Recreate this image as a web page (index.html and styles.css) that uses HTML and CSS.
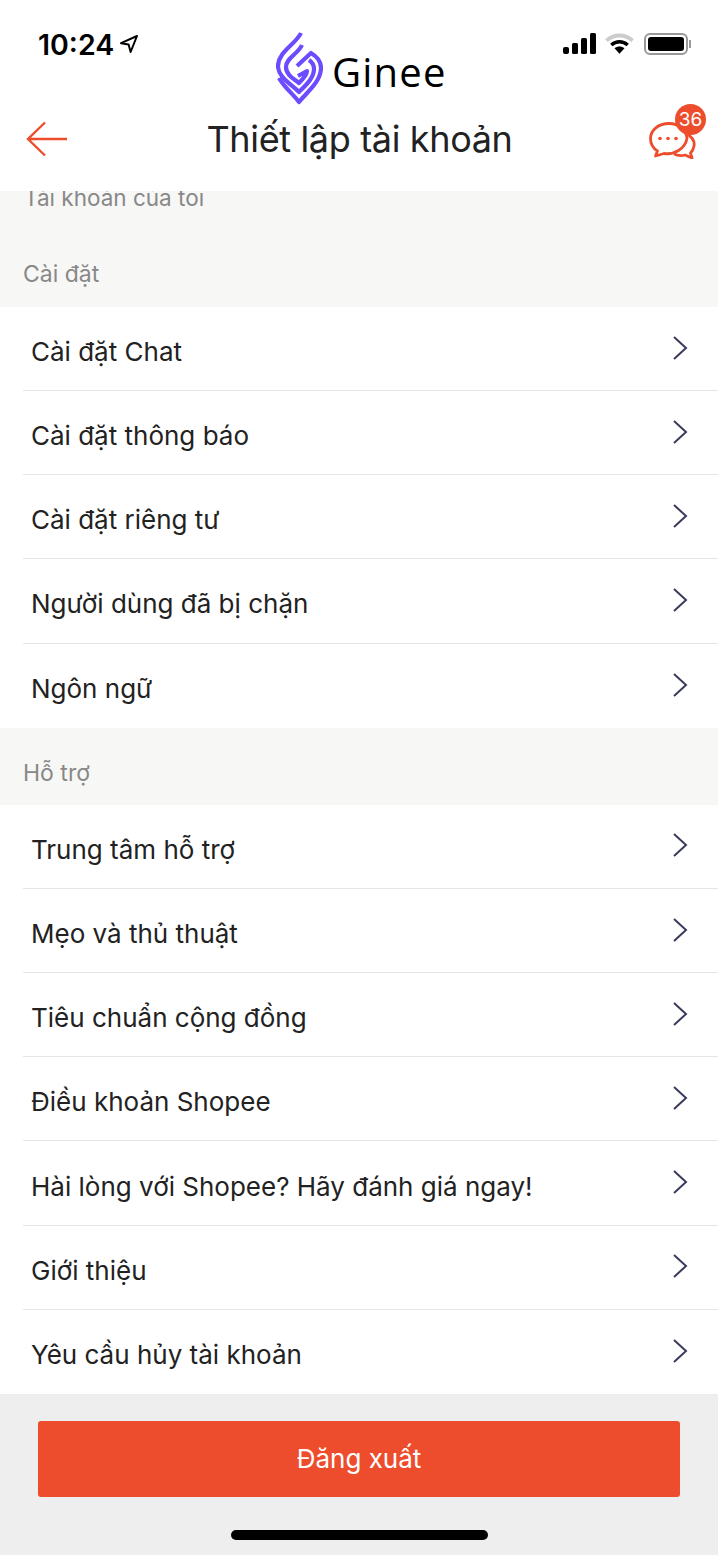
FILE: index.html
```html
<!DOCTYPE html>
<html lang="en">
<head>
    <meta charset="UTF-8">
    <title>Thiết lập tài khoản</title>
    <link rel="stylesheet" href="styles.css">
</head>
<body>
<div class="page">
    <header class="top">
        <div class="status">
            <div class="time">
                <span>10:24</span>
                <svg class="loc" viewBox="0 0 20 20"><path d="M18 2 2 9.2 l7.6 1.4 L11.6 18z" fill="none" stroke="#000" stroke-width="2" stroke-linejoin="round"/></svg>
            </div>
            <div class="status-icons">
                <svg class="signal" viewBox="0 0 33 21"><rect x="0" y="14" width="6" height="7" rx="2"/><rect x="9" y="10" width="6" height="11" rx="1.5"/><rect x="18" y="5" width="6" height="16" rx="1.5"/><rect x="27" y="0" width="6" height="21" rx="1.5"/></svg>
                <svg class="wifi" viewBox="0 0 30 21">
                    <path d="M1.5 7.5C9 .5 21 .5 28.5 7.5" fill="none" stroke="#ccc" stroke-width="4"/>
                    <path d="M6.5 12C11.5 7.5 18.5 7.5 23.5 12" fill="none" stroke="#000" stroke-width="3.5"/>
                    <path d="M15 21 9.8 15.5C13 13 17 13 20.2 15.5z"/>
                </svg>
                <div class="battery"><div class="battery-fill"></div></div>
                <div class="battery-cap"></div>
            </div>
        </div>
        <div class="brand">
            <svg class="brand-logo" viewBox="0 0 47 73">
                <g fill="none" stroke="#6d4cff" stroke-width="4.2" stroke-linejoin="round">
                    <path d="M3 46C8 55 17 62 23 70C30 61 45 50 45 36C45 29 40 24 35 21L21 34"/>
                    <path d="M25 1C20 12 2 20 2 34C2 45 15 52 23 60C30 53 38 46 38 37C38 33 36 30 33 28"/>
                    <path d="M26 13C22 22 10 26 10 35C10 43 18 47 23 51C27 47 31 43 31 39L22 44"/>
                </g>
            </svg>
            <span class="brand-name">Ginee</span>
        </div>
        <div class="nav">
            <svg class="back" viewBox="0 0 42 36"><path d="M41 18H2M19 1.5 2 18l17 16.5" fill="none" stroke="#ee4d2d" stroke-width="2.4"/></svg>
            <h1 class="title">Thiết lập tài khoản</h1>
            <div class="chat">
                <svg class="chat-icon" viewBox="0 0 47 37">
                    <g fill="none" stroke="#ee4d2d" stroke-width="2.8" stroke-linejoin="round">
                        <path d="M20 1.5C9.5 1.5 1.5 8 1.5 16.5C1.5 22.5 4.5 26.5 8.5 29L6.5 34L15 31.5C25 33 36 27 38 16.5C37 8 30 1.5 20 1.5z"/>
                        <path d="M38 12C43 15 46 19 45 24C44.5 27 43.5 29 41.5 31L43 36L36 33C32 34 28 33.5 25 32"/>
                    </g>
                    <g fill="#ee4d2d"><circle cx="11" cy="16.5" r="1.8"/><circle cx="19" cy="16.5" r="1.8"/><circle cx="27" cy="16.5" r="1.8"/></g>
                </svg>
                <span class="badge">36</span>
            </div>
        </div>
    </header>

    <div class="cut-row"><span>Tài khoản của tôi</span></div>

    <div class="section-label">Cài đặt</div>
    <ul class="list">
        <li class="row"><span>Cài đặt Chat</span><svg class="chev" viewBox="0 0 16 26"><path d="M2 2l12 11L2 24"/></svg></li>
        <li class="row"><span>Cài đặt thông báo</span><svg class="chev" viewBox="0 0 16 26"><path d="M2 2l12 11L2 24"/></svg></li>
        <li class="row"><span>Cài đặt riêng tư</span><svg class="chev" viewBox="0 0 16 26"><path d="M2 2l12 11L2 24"/></svg></li>
        <li class="row"><span>Người dùng đã bị chặn</span><svg class="chev" viewBox="0 0 16 26"><path d="M2 2l12 11L2 24"/></svg></li>
        <li class="row"><span>Ngôn ngữ</span><svg class="chev" viewBox="0 0 16 26"><path d="M2 2l12 11L2 24"/></svg></li>
    </ul>

    <div class="section-label">Hỗ trợ</div>
    <ul class="list">
        <li class="row"><span>Trung tâm hỗ trợ</span><svg class="chev" viewBox="0 0 16 26"><path d="M2 2l12 11L2 24"/></svg></li>
        <li class="row"><span>Mẹo và thủ thuật</span><svg class="chev" viewBox="0 0 16 26"><path d="M2 2l12 11L2 24"/></svg></li>
        <li class="row"><span>Tiêu chuẩn cộng đồng</span><svg class="chev" viewBox="0 0 16 26"><path d="M2 2l12 11L2 24"/></svg></li>
        <li class="row"><span>Điều khoản Shopee</span><svg class="chev" viewBox="0 0 16 26"><path d="M2 2l12 11L2 24"/></svg></li>
        <li class="row"><span>Hài lòng với Shopee? Hãy đánh giá ngay!</span><svg class="chev" viewBox="0 0 16 26"><path d="M2 2l12 11L2 24"/></svg></li>
        <li class="row"><span>Giới thiệu</span><svg class="chev" viewBox="0 0 16 26"><path d="M2 2l12 11L2 24"/></svg></li>
        <li class="row"><span>Yêu cầu hủy tài khoản</span><svg class="chev" viewBox="0 0 16 26"><path d="M2 2l12 11L2 24"/></svg></li>
    </ul>

    <footer class="bottom">
        <button class="logout" type="button">Đăng xuất</button>
        <div class="home-bar"></div>
    </footer>
</div>
</body>
</html>
```

FILE: styles.css
```css
*{box-sizing: border-box;}
html,body{
    margin: 0;
    padding: 0;
    background: #fff;
}
.page{
    width: 718px;
    height: 1555px;
    overflow: hidden;
    font-family: Inter, "Liberation Sans", sans-serif;
    background: #f7f7f5;
    color: #222;
}

/* header */
.top{
    height: 191px;
    background: #fff;
    padding-top: 27px;
    position: relative;
}
.status{
    display: flex;
    justify-content: space-between;
    height: 34px;
    padding: 0 27px 0 38px;
}
.time{
    display: flex;
    align-items: center;
    gap: 5px;
    font-size: 28.5px;
    font-weight: 600;
    color: #000;
}
.loc{
    width: 20px;
    height: 20px;
}
.status-icons{
    display: flex;
    align-items: center;
    margin-top: -1px;
}
.signal{
    width: 33px;
    height: 21px;
    margin-right: 9px;
}
.wifi{
    width: 29px;
    height: 21px;
    margin-right: 10px;
}
.battery{
    width: 44px;
    height: 22px;
    border: 2px solid #999;
    border-radius: 6px;
    padding: 2px;
}
.battery-fill{
    height: 100%;
    background: #000;
    border-radius: 3px;
}
.battery-cap{
    width: 2px;
    height: 8px;
    margin-left: 1px;
    background: #999;
}
.brand{
    position: absolute;
    left: 276px;
    top: 32px;
    display: flex;
    align-items: center;
    gap: 9px;
}
.brand-logo{
    width: 47px;
    height: 73px;
}
.brand-name{
    padding-top: 6px;
    font-family: "Open Sans", sans-serif;
    font-size: 40px;
    color: #000;
    letter-spacing: 1.2px;
}
.nav{
    position: absolute;
    left: 0;
    right: 0;
    top: 104px;
    height: 70px;
    display: flex;
    align-items: center;
    justify-content: space-between;
    padding: 0 11px 0 26px;
}
.back{
    width: 42px;
    height: 36px;
}
.title{
    margin: 0 0 0 3px;
    font-size: 36px;
    font-weight: 400;
    color: #222;
    letter-spacing: -0.35px;
}
.chat{
    width: 59px;
    height: 62px;
    position: relative;
}
.chat-icon{
    width: 47px;
    height: 37px;
    position: absolute;
    left: 1px;
    top: 14px;
}
.badge{
    position: absolute;
    right: 1px;
    top: -4px;
    width: 31px;
    height: 31px;
    border-radius: 50%;
    background: #ee4d2d;
    color: #fff;
    font-size: 19px;
    text-align: center;
    line-height: 31px;
}

/* list */
.cut-row{
    height: 15px;
    overflow: hidden;
    padding-left: 24px;
    color: #888;
    font-size: 22.5px;
    line-height: 14px;
}
.section-label{
    height: 101px;
    display: flex;
    align-items: flex-end;
    padding: 0 0 18px 23px;
    color: #888;
    font-size: 23px;
    line-height: 1.2;
}
.list ~ .section-label{
    height: 77.2px;
    padding-bottom: 17px;
}
.list{
    list-style: none;
    margin: 0;
    padding: 0 0 0 23px;
    background: #fff;
}
.row{
    height: 84.15px;
    display: flex;
    align-items: center;
    justify-content: space-between;
    padding: 6px 30px 0 8px;
    border-bottom: 1px solid #e5e5e5;
    font-size: 26px;
    color: #222;
}
.row:last-child{
    border-bottom: none;
}
.chev{
    width: 16px;
    height: 26px;
    margin-top: -8px;
    fill: none;
    stroke: #3a3a5c;
    stroke-width: 2;
}

/* bottom */
.bottom{
    height: 161px;
    background: #eee;
    padding: 27px 38px 0;
}
.logout{
    display: block;
    width: 642px;
    height: 76px;
    border: none;
    border-radius: 3px;
    background: #ee4d2d;
    color: #fff;
    font-family: Inter, "Liberation Sans", sans-serif;
    font-size: 26px;
}
.home-bar{
    width: 257px;
    height: 10px;
    margin: 33px auto 0 193px;
    border-radius: 5px;
    background: #000;
}
```
